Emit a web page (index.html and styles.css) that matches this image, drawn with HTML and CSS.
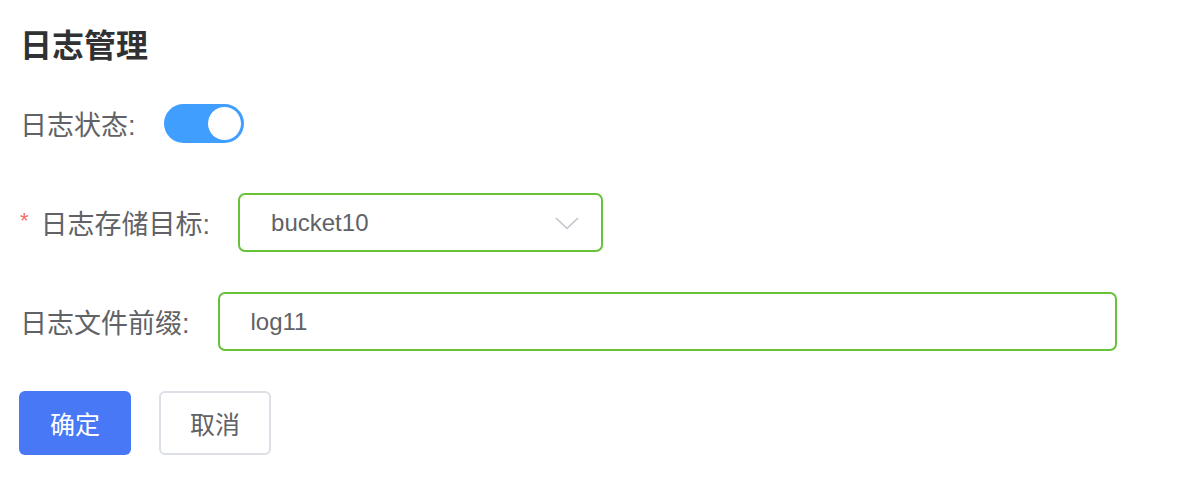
FILE: index.html
```html
<!DOCTYPE html>
<html lang="zh-CN">
<head>
<meta charset="utf-8">
<title>日志管理</title>
<link rel="stylesheet" href="styles.css">
</head>
<body>
<div class="page">
  <h1 class="title">日志管理</h1>
  <form class="form">
    <div class="row">
      <label class="label">日志状态:</label>
      <span class="switch"><span class="knob"></span></span>
    </div>
    <div class="row">
      <label class="label"><span class="req">*</span>日志存储目标:</label>
      <div class="select">
        <span class="value">bucket10</span>
        <svg class="chev" width="24" height="13" viewBox="0 0 24 13"><path d="M1 1 L12 11.5 L23 1" fill="none" stroke="#c0c4cc" stroke-width="1.6"/></svg>
      </div>
    </div>
    <div class="row">
      <label class="label">日志文件前缀:</label>
      <div class="input"><span class="value">log11</span></div>
    </div>
    <div class="actions">
      <button type="button" class="btn btn-primary">确定</button>
      <button type="button" class="btn btn-default">取消</button>
    </div>
  </form>
</div>
</body>
</html>
```
FILE: styles.css
```css
html, body {
  margin: 0;
  padding: 0;
  background: #ffffff;
}
body {
  font-family: "Liberation Sans", "Noto Sans CJK SC", sans-serif;
}
.page {
  padding: 24px 0 0 20px;
}
.title {
  margin: 0 0 26px 0;
  font-size: 32px;
  line-height: 44px;
  font-weight: 700;
  color: #303133;
}
.form {
  display: flex;
  flex-direction: column;
  gap: 40px;
}
.row {
  display: flex;
  align-items: center;
  height: 59px;
}
.label {
  font-size: 27px;
  color: #606266;
  margin-right: 28px;
  white-space: nowrap;
  display: flex;
  align-items: center;
}
.req {
  color: #f56c6c;
  font-size: 22px;
  margin-right: 12px;
  position: relative;
  top: -2px;
}
.switch {
  position: relative;
  width: 80px;
  height: 39px;
  border-radius: 20px;
  background: #409eff;
  display: inline-block;
}
.knob {
  position: absolute;
  right: 3px;
  top: 3px;
  width: 33px;
  height: 33px;
  border-radius: 50%;
  background: #ffffff;
}
.select, .input {
  box-sizing: border-box;
  height: 59px;
  border: 2px solid #67c23a;
  border-radius: 7px;
  display: flex;
  align-items: center;
  padding: 0 22px 0 31px;
  font-size: 24px;
  color: #606266;
}
.select {
  width: 365px;
  justify-content: space-between;
}
.input {
  width: 899px;
}
.chev {
  display: block;
  margin-top: 1px;
}
.actions {
  display: flex;
  gap: 28px;
  margin-left: -1px;
}
.btn {
  box-sizing: border-box;
  width: 112px;
  height: 64px;
  border-radius: 6px;
  font-family: "Liberation Sans", "Noto Sans CJK SC", sans-serif;
  font-size: 25px;
  cursor: pointer;
  padding: 0;
}
.btn-primary {
  background: #4878f6;
  border: none;
  color: #ffffff;
}
.btn-default {
  background: #ffffff;
  border: 2px solid #dcdfe6;
  color: #606266;
}
```
